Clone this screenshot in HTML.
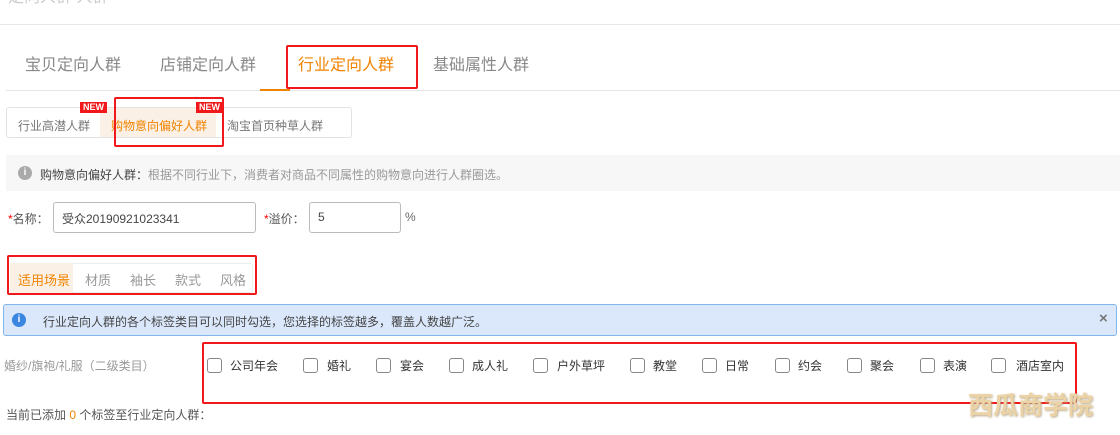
<!DOCTYPE html>
<html><head><meta charset="utf-8"><style>
*{margin:0;padding:0;box-sizing:border-box}
body{width:1120px;height:435px;background:#fff;position:relative;overflow:hidden;font-family:"Liberation Sans","Noto Sans CJK SC",sans-serif;color:#333;font-size:12px}
.a{position:absolute;white-space:nowrap}
.rb{position:absolute;border:2px solid #f0181a;border-radius:2px}
.cb{position:absolute;width:15px;height:15px;border:1px solid #888;border-radius:3px;background:#fff}
.new{position:absolute;background:#f0181a;color:#fff;font-size:9px;font-weight:bold;height:11px;line-height:11px;padding:0 3px}
</style></head><body>
<div class="a" style="left:8px;top:-17px;font-size:16px;color:#ccc">定向人群 人群</div>
<div class="a" style="left:0;top:24px;width:1120px;height:1px;background:#e8e8e8"></div>

<div class="a" style="left:25px;top:51px;font-size:16px;color:#888">宝贝定向人群</div>
<div class="a" style="left:160px;top:51px;font-size:16px;color:#888">店铺定向人群</div>
<div class="a" style="left:298px;top:51px;font-size:16px;color:#f08300">行业定向人群</div>
<div class="a" style="left:433px;top:51px;font-size:16px;color:#888">基础属性人群</div>
<div class="a" style="left:6px;top:90px;width:1114px;height:1px;background:#e5e5e5"></div>
<div class="a" style="left:260px;top:89px;width:30px;height:2px;background:#f08300"></div>
<div class="rb" style="left:286px;top:45px;width:132px;height:44px"></div>

<div class="a" style="left:6px;top:107px;width:346px;height:31px;border:1px solid #e3e3e3;border-radius:3px"></div>
<div class="a" style="left:100px;top:108px;width:116px;height:29px;background:#fbf0e6"></div>
<div class="a" style="left:18px;top:117px;color:#777">行业高潜人群</div>
<div class="a" style="left:111px;top:117px;color:#f08300">购物意向偏好人群</div>
<div class="a" style="left:227px;top:117px;color:#777">淘宝首页种草人群</div>
<div class="new" style="left:80px;top:102px">NEW</div>
<div class="new" style="left:196px;top:102px">NEW</div>
<div class="rb" style="left:114px;top:97px;width:110px;height:50px"></div>

<div class="a" style="left:6px;top:155px;width:1114px;height:36px;background:#f7f7f7"></div>
<div class="a" style="left:18px;top:166px;width:14px;height:14px;border-radius:50%;background:#aaa;color:#fff;font-size:10px;font-weight:bold;text-align:center;line-height:14px">i</div>
<div class="a" style="left:40px;top:166px;color:#444">购物意向偏好人群：<span style="color:#999">根据不同行业下，消费者对商品不同属性的购物意向进行人群圈选。</span></div>

<div class="a" style="left:8px;top:210px;color:#555"><span style="color:#f00">*</span>名称：</div>
<div class="a" style="left:53px;top:202px;width:203px;height:31px;border:1px solid #bbb;border-radius:3px"></div>
<div class="a" style="left:62px;top:210px;color:#444">受众20190921023341</div>
<div class="a" style="left:264px;top:210px;color:#555"><span style="color:#f00">*</span>溢价：</div>
<div class="a" style="left:309px;top:202px;width:92px;height:31px;border:1px solid #bbb;border-radius:3px"></div>
<div class="a" style="left:318px;top:210px;color:#444">5</div>
<div class="a" style="left:405px;top:210px;color:#666">%</div>

<div class="a" style="left:10px;top:263px;width:243px;height:30px;border:1px solid #eee;border-radius:3px"></div>
<div class="a" style="left:10px;top:263px;width:63px;height:30px;background:#fbf0e6"></div>
<div class="a" style="left:18px;top:270px;color:#f08300;font-size:13px">适用场景</div>
<div class="a" style="left:85px;top:270px;color:#999;font-size:13px">材质</div>
<div class="a" style="left:130px;top:270px;color:#999;font-size:13px">袖长</div>
<div class="a" style="left:175px;top:270px;color:#999;font-size:13px">款式</div>
<div class="a" style="left:220px;top:270px;color:#999;font-size:13px">风格</div>
<div class="rb" style="left:7px;top:255px;width:250px;height:40px"></div>

<div class="a" style="left:3px;top:304px;width:1114px;height:32px;background:#dbe8fb;border:1px solid #82b4ee;border-radius:3px"></div>
<div class="a" style="left:12px;top:313px;width:14px;height:14px;border-radius:50%;background:#3a86e0;color:#fff;font-size:10px;font-weight:bold;text-align:center;line-height:14px">i</div>
<div class="a" style="left:43px;top:313px;color:#444">行业定向人群的各个标签类目可以同时勾选，您选择的标签越多，覆盖人数越广泛。</div>
<div class="a" style="left:1099px;top:310px;color:#777;font-size:15px;font-weight:bold">×</div>

<div class="a" style="left:4px;top:357px;color:#999">婚纱/旗袍/礼服（二级类目）</div>
<div class="cb" style="left:207px;top:358px"></div><div class="a" style="left:230px;top:357px">公司年会</div>
<div class="cb" style="left:303px;top:358px"></div><div class="a" style="left:327px;top:357px">婚礼</div>
<div class="cb" style="left:376px;top:358px"></div><div class="a" style="left:400px;top:357px">宴会</div>
<div class="cb" style="left:449px;top:358px"></div><div class="a" style="left:472px;top:357px">成人礼</div>
<div class="cb" style="left:533px;top:358px"></div><div class="a" style="left:557px;top:357px">户外草坪</div>
<div class="cb" style="left:630px;top:358px"></div><div class="a" style="left:653px;top:357px">教堂</div>
<div class="cb" style="left:702px;top:358px"></div><div class="a" style="left:725px;top:357px">日常</div>
<div class="cb" style="left:775px;top:358px"></div><div class="a" style="left:798px;top:357px">约会</div>
<div class="cb" style="left:847px;top:358px"></div><div class="a" style="left:870px;top:357px">聚会</div>
<div class="cb" style="left:920px;top:358px"></div><div class="a" style="left:943px;top:357px">表演</div>
<div class="cb" style="left:991px;top:358px"></div><div class="a" style="left:1016px;top:357px">酒店室内</div>
<div class="rb" style="left:202px;top:342px;width:875px;height:62px"></div>

<div class="a" style="left:968px;top:386px;font-size:25px;font-weight:bold;color:#ecd3a6;text-shadow:1px 1px 2px #b8a88a">西瓜商学院</div>
<div class="a" style="left:6px;top:406px;color:#555">当前已添加 <span style="color:#f08300">0</span> 个标签至行业定向人群：</div>
</body></html>
